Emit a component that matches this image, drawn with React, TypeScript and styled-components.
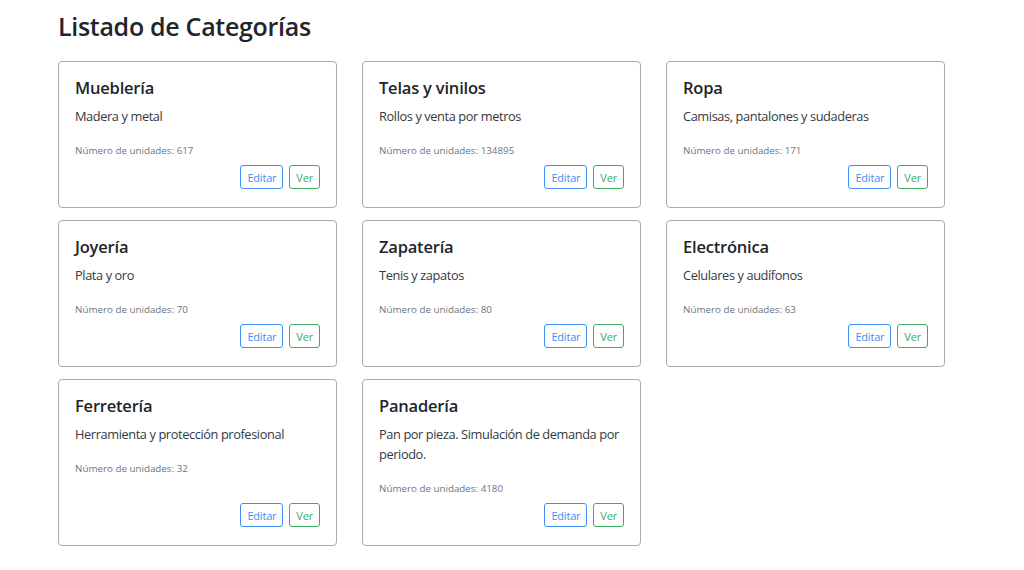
import styled, { createGlobalStyle } from 'styled-components';

const categorias = [
  { nombre: 'Mueblería', descripcion: 'Madera y metal', unidades: 617 },
  { nombre: 'Telas y vinilos', descripcion: 'Rollos y venta por metros', unidades: 134895 },
  { nombre: 'Ropa', descripcion: 'Camisas, pantalones y sudaderas', unidades: 171 },
  { nombre: 'Joyería', descripcion: 'Plata y oro', unidades: 70 },
  { nombre: 'Zapatería', descripcion: 'Tenis y zapatos', unidades: 80 },
  { nombre: 'Electrónica', descripcion: 'Celulares y audífonos', unidades: 63 },
  { nombre: 'Ferretería', descripcion: 'Herramienta y protección profesional', unidades: 32 },
  { nombre: 'Panadería', descripcion: 'Pan por pieza. Simulación de demanda por periodo.', unidades: 4180 },
];

const GlobalStyle = createGlobalStyle`
  body {
    margin: 0;
    background: #fff;
    color: #212529;
    font-family: "Open Sans", "Noto Sans", sans-serif;
  }
`;

const Page = styled.div`
  padding: 8px 0 0 58px;
`;

const Title = styled.h1`
  margin: 0 0 17px;
  font-size: 25px;
  font-weight: 600;
  line-height: 36px;
  letter-spacing: -0.3px;
`;

const Grid = styled.div`
  display: grid;
  grid-template-columns: repeat(3, 279px);
  column-gap: 25px;
  row-gap: 12px;
`;

const Card = styled.div`
  border: 1px solid #a9abad;
  border-radius: 4px;
  padding: 15px 16px 18px;
  display: flex;
  flex-direction: column;
`;

const CardTitle = styled.h5`
  margin: 0 0 7px;
  font-size: 16.5px;
  font-weight: 600;
  line-height: 22px;
  letter-spacing: -0.2px;
`;

const CardText = styled.p`
  margin: 0 0 18px;
  font-size: 12.8px;
  line-height: 20px;
  letter-spacing: -0.4px;
  color: #343a40;
`;

const Muted = styled.small`
  font-size: 9.8px;
  line-height: 14px;
  color: #6c757d;
`;

const Actions = styled.div`
  margin-top: auto;
  padding-top: 7px;
  display: flex;
  justify-content: flex-end;
  gap: 6px;
`;

const Button = styled.button<{ $color: string }>`
  height: 24px;
  padding: 0 6px;
  font-family: inherit;
  font-size: 11px;
  letter-spacing: -0.2px;
  background: #fff;
  color: ${({ $color }) => $color};
  border: 1px solid ${({ $color }) => $color};
  border-radius: 3px;
  cursor: pointer;
`;

export default function App() {
  return (
    <Page>
      <GlobalStyle />
      <Title>Listado de Categorías</Title>
      <Grid>
        {categorias.map((c) => (
          <Card key={c.nombre}>
            <CardTitle>{c.nombre}</CardTitle>
            <CardText>{c.descripcion}</CardText>
            <Muted>Número de unidades: {c.unidades}</Muted>
            <Actions>
              <Button $color="#3a8ef6">Editar</Button>
              <Button $color="#3aae5c">Ver</Button>
            </Actions>
          </Card>
        ))}
      </Grid>
    </Page>
  );
}
